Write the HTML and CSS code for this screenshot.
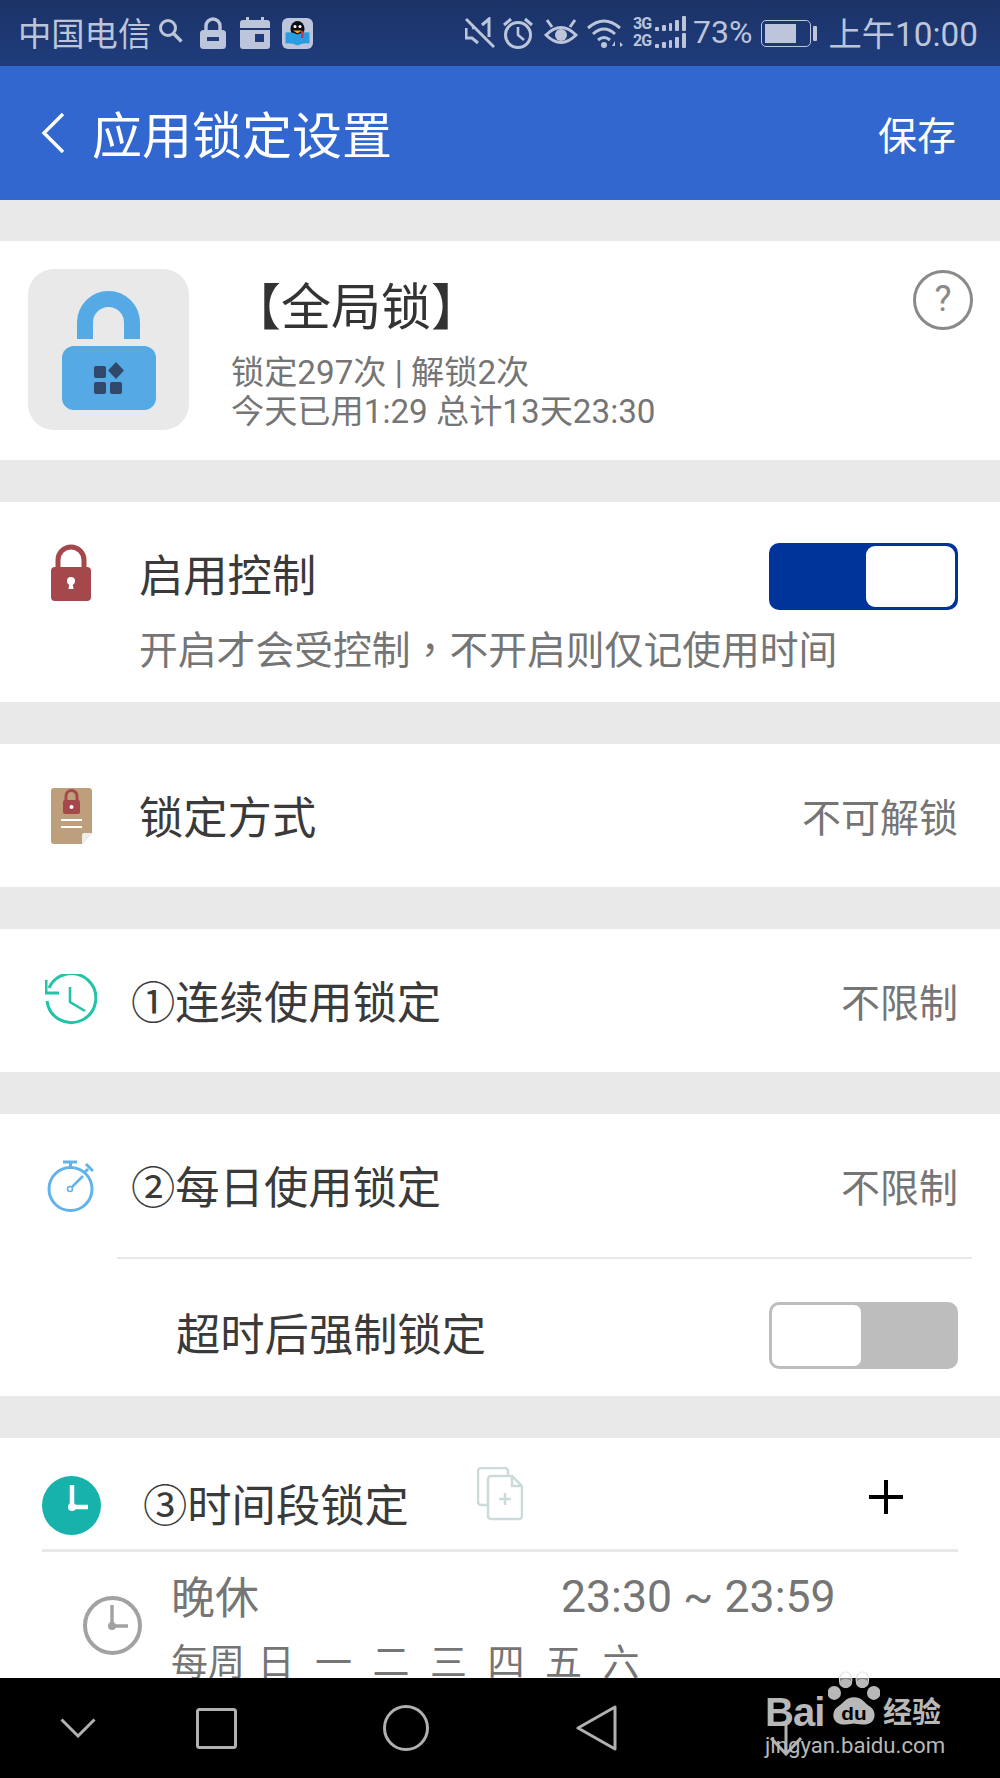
FILE: index.html
```html
<!DOCTYPE html>
<html lang="zh-CN">
<head>
  <meta charset="UTF-8" />
  <meta name="viewport" content="width=device-width, initial-scale=1.0">
  <title>应用锁定设置</title>
  <link rel="stylesheet" href="styles.css">
</head>
<body>
  <div class="status-bar">
    <div class="status-left">
      <span class="carrier">中国电信</span>
      <svg class="st-search" viewBox="0 0 26 26"><circle cx="10" cy="10" r="7.5" fill="none" stroke="#bcc5d9" stroke-width="3"/><path d="M15.5 15.5l8 8" stroke="#bcc5d9" stroke-width="3.4"/></svg>
      <svg class="st-lock" viewBox="0 0 26 32"><path d="M6 14V9a7 7 0 0 1 14 0v5" fill="none" stroke="#bcc5d9" stroke-width="3.4"/><rect y="13" width="26" height="19" rx="3.5" fill="#bcc5d9"/><rect x="7" y="20" width="12" height="4" fill="#1e3a78"/></svg>
      <svg class="st-cal" viewBox="0 0 30 32"><path d="M3 3h24a3 3 0 0 1 3 3v5H0V6a3 3 0 0 1 3-3zM0 13h30v16a3 3 0 0 1-3 3H3a3 3 0 0 1-3-3z" fill="#bcc5d9"/><rect x="6" y="0" width="3" height="4" fill="#bcc5d9"/><rect x="21" y="0" width="3" height="4" fill="#bcc5d9"/><rect x="15" y="17" width="9" height="8" fill="#1e3a78"/></svg>
      <svg class="st-qq" viewBox="0 0 31 31">
        <rect width="31" height="31" rx="6" fill="#bcc5d9"/>
        <ellipse cx="15.5" cy="11" rx="7" ry="8" fill="#0c0c14"/>
        <circle cx="13" cy="8.5" r="1.5" fill="#fff"/><circle cx="18" cy="8.5" r="1.5" fill="#fff"/>
        <path d="M11 12.5h9l-4.5 3z" fill="#f0a020"/>
        <path d="M3.5 14.5q6-1 12 2q6-3 12-2v11q-6-1-12 2q-6-3-12-2z" fill="#2a9ce0"/>
        <rect x="19" y="13" width="2.4" height="7" fill="#c8305a"/>
      </svg>
    </div>
    <div class="status-right">
      <svg class="st-mute" viewBox="0 0 30 32"><path d="M1 11v10h6l6 5M24 20V2l-7 6" fill="none" stroke="#bcc5d9" stroke-width="3"/><path d="M1 2l28 28" stroke="#bcc5d9" stroke-width="3"/><path d="M10 10L7 11" stroke="#bcc5d9" stroke-width="3"/></svg>
      <svg class="st-alarm" viewBox="0 0 30 32"><circle cx="15" cy="18" r="12.5" fill="none" stroke="#bcc5d9" stroke-width="3"/><path d="M15 10v8l6 5" fill="none" stroke="#bcc5d9" stroke-width="2.6"/><path d="M1 8l7-6M29 8l-7-6" stroke="#bcc5d9" stroke-width="3"/></svg>
      <svg class="st-eye" viewBox="0 0 34 30"><path d="M2 17q15-15 30 0q-15 15-30 0z" fill="none" stroke="#bcc5d9" stroke-width="3"/><circle cx="17" cy="17" r="6" fill="#bcc5d9"/><path d="M3 2l5 7M31 2l-5 7M17 0v0" stroke="#bcc5d9" stroke-width="3"/></svg>
      <svg class="st-wifi" viewBox="0 0 36 32"><g fill="none" stroke="#bcc5d9" stroke-width="3"><path d="M1 11q16-14 32 0"/><path d="M6 17q11-10 22 0"/><path d="M11 23q6-5 12 0"/></g><circle cx="17" cy="28" r="3" fill="#bcc5d9"/><path d="M28 24l-3 5h3zM31 23v9M33 25l3 3-3 2z" fill="#bcc5d9"/></svg>
      <div class="signal">
        <div class="signal-row"><span class="net">3G</span><i class="b b1"></i><i class="b b2"></i><i class="b b3"></i><i class="b b4"></i><i class="b b5"></i></div>
        <div class="signal-row"><span class="net">2G</span><i class="b b1"></i><i class="b b2"></i><i class="b b3"></i><i class="b b4"></i><i class="b b5"></i></div>
      </div>
      <span class="percent">73%</span>
      <div class="battery"><div class="battery-body"><div class="battery-fill"></div></div><div class="battery-tip"></div></div>
      <span class="clock">上午10:00</span>
    </div>
  </div>

  <div class="toolbar">
    <svg class="back" viewBox="0 0 24 42"><path d="M22 2L3 21l19 19" fill="none" stroke="#fff" stroke-width="3.4"/></svg>
    <span class="toolbar-title">应用锁定设置</span>
    <span class="toolbar-save">保存</span>
  </div>

  <main class="content">
    <section class="card app-card">
      <div class="app-icon">
        <svg viewBox="0 0 161 161" width="161" height="161">
          <path d="M57 70V53.500a23.500 23.500 0 0 1 47 0V70" fill="none" stroke="#55a9e4" stroke-width="16"/>
          <rect x="34" y="77" width="94" height="64" rx="12" fill="#55a9e4"/>
          <g fill="#32486b">
            <rect x="66" y="97" width="12" height="12" rx="2"/>
            <rect x="66" y="113" width="12" height="12" rx="2"/>
            <rect x="82" y="113" width="12" height="12" rx="2"/>
            <path d="M88 93l8 8.500-8 8.500-8-8.500z"/>
          </g>
        </svg>
      </div>
      <div class="app-info">
        <div class="app-name">【全局锁】</div>
        <div class="app-stat">锁定297次 | 解锁2次</div>
        <div class="app-stat">今天已用1:29 总计13天23:30</div>
      </div>
      <div class="help">?</div>
    </section>

    <section class="card enable-card">
      <svg class="ic-red" viewBox="0 0 40 60"><path d="M7 28V18a13 13 0 0 1 26 0v10" fill="none" stroke="#a5484c" stroke-width="5"/><rect x="0" y="25" width="40" height="34" rx="4" fill="#a5484c"/><circle cx="20" cy="39" r="4" fill="#fff"/><path d="M18.500 40h3l1 7h-5z" fill="#fff"/></svg>
      <div class="enable-text">
        <div class="row-label">启用控制</div>
        <div class="enable-desc">开启才会受控制<span class="punct" lang="zh-TW">，</span>不开启则仅记使用时间</div>
      </div>
      <div class="toggle on"><div class="knob"></div></div>
    </section>

    <section class="card row">
      <svg class="ic-book" viewBox="0 0 41 56">
        <path d="M3 0h35a3 3 0 0 1 3 3v42l-10 11H3a3 3 0 0 1-3-3V3a3 3 0 0 1 3-3z" fill="#bd9f7c"/>
        <path d="M31 56V47a2 2 0 0 1 2-2h8z" fill="#eee"/>
        <path d="M15 13V8a5.500 5.500 0 0 1 11 0v5" fill="none" stroke="#a5484c" stroke-width="3"/>
        <rect x="12" y="12" width="17" height="14" rx="2" fill="#a5484c"/>
        <circle cx="20.500" cy="19" r="2" fill="#fff"/>
        <rect x="10" y="31" width="21" height="2" fill="#fff"/><rect x="10" y="38" width="21" height="2" fill="#fff"/>
      </svg>
      <span class="row-label row-main">锁定方式</span>
      <span class="row-value">不可解锁</span>
    </section>

    <section class="card row row-tight">
      <svg class="ic-history" viewBox="0 0 52 53"><path d="M4 14A24.500 24.500 0 1 1 2 27" fill="none" stroke="#22c3a6" stroke-width="3"/><path d="M1 6v13h13" fill="none" stroke="#22c3a6" stroke-width="3"/><path d="M25 13v15l15 9" fill="none" stroke="#22c3a6" stroke-width="2.6"/></svg>
      <span class="row-label row-main">①连续使用锁定</span>
      <span class="row-value">不限制</span>
    </section>

    <section class="card daily-card">
      <div class="row row-tight daily-head">
        <svg class="ic-watch" viewBox="0 0 47 52"><circle cx="23.500" cy="29" r="21.500" fill="none" stroke="#62b3ec" stroke-width="3"/><path d="M16 2h14M23.500 2v6M37 13l4-4M39 4l7 7" fill="none" stroke="#62b3ec" stroke-width="3"/><circle cx="23" cy="29" r="2.500" fill="none" stroke="#62b3ec" stroke-width="1.600"/><path d="M25 27l11-11" stroke="#62b3ec" stroke-width="2.500"/></svg>
        <span class="row-label row-main">②每日使用锁定</span>
        <span class="row-value">不限制</span>
      </div>
      <div class="force-row">
        <span class="row-label">超时后强制锁定</span>
        <div class="toggle off"><div class="knob"></div></div>
      </div>
    </section>

    <section class="card period-card">
      <div class="period-head">
        <svg class="ic-teal" viewBox="0 0 59 59"><circle cx="29.500" cy="29.500" r="29.500" fill="#17b3ab"/><path d="M30 9v22h16" fill="none" stroke="#fff" stroke-width="4.500"/><circle cx="30" cy="31" r="4" fill="#fff"/></svg>
        <span class="period-title">③时间段锁定</span>
        <svg class="ic-copy" viewBox="0 0 46 54"><g fill="#fff" stroke="#ccdbda" stroke-width="2.500"><path d="M27 38H4a3 3 0 0 1-3-3V4a3 3 0 0 1 3-3h24a3 3 0 0 1 3 3v5"/><path d="M14 9h21l10 10v30a3 3 0 0 1-3 3H14a3 3 0 0 1-3-3V12a3 3 0 0 1 3-3z"/><path d="M35 9v10h10" fill="none"/><path d="M28 26v12M22 32h12" fill="none"/></g></svg>
        <svg class="ic-plus" viewBox="0 0 34 34"><path d="M17 0v34M0 17h34" stroke="#000" stroke-width="4"/></svg>
      </div>
      <div class="period-item">
        <svg class="ic-grey" viewBox="0 0 59 59"><circle cx="29.500" cy="29.500" r="27.500" fill="none" stroke="#a2a2a2" stroke-width="4"/><path d="M29 9v21h16" fill="none" stroke="#a2a2a2" stroke-width="3.500"/><circle cx="29" cy="30" r="4" fill="#a2a2a2"/></svg>
        <div class="period-info">
          <div class="period-top"><span class="period-name">晚休</span><span class="period-time">23:30 ~ 23:59</span></div>
          <div class="period-days"><span class="days-label">每周</span><span>日</span><span>一</span><span>二</span><span>三</span><span>四</span><span>五</span><span>六</span></div>
        </div>
      </div>
    </section>
  </main>

  <nav class="navbar">
    <svg class="nav-down" viewBox="0 0 36 20"><path d="M1.500 1.500L18 18 34.500 1.500" fill="none" stroke="#b0b0b0" stroke-width="3"/></svg>
    <svg class="nav-square" viewBox="0 0 41 41"><rect x="1.500" y="1.500" width="38" height="38" rx="2" fill="none" stroke="#b0b0b0" stroke-width="3"/></svg>
    <svg class="nav-circle" viewBox="0 0 46 46"><circle cx="23" cy="23" r="21.500" fill="none" stroke="#b0b0b0" stroke-width="3"/></svg>
    <svg class="nav-back" viewBox="0 0 41 46"><path d="M39 2v42L2 23z" fill="none" stroke="#b0b0b0" stroke-width="3" stroke-linejoin="round"/></svg>
    <svg class="nav-pull" viewBox="0 0 32 34"><path d="M16 0v32M1 16l15 16 15-16" fill="none" stroke="#b0b0b0" stroke-width="3"/></svg>
  </nav>

  <div class="watermark">
    <div class="wm-top">
      <span class="wm-bai">Bai</span>
      <svg class="wm-paw" viewBox="0 0 50 64" preserveAspectRatio="none">
        <ellipse cx="17" cy="10" rx="6" ry="9" fill="#fff" fill-opacity=".5" stroke="#ddd"/>
        <ellipse cx="33" cy="10" rx="6" ry="9" fill="#fff" fill-opacity=".5" stroke="#ddd"/>
        <ellipse cx="6" cy="25" rx="6.500" ry="8" fill="#b8b8b8"/>
        <ellipse cx="44" cy="25" rx="6.500" ry="8" fill="#b8b8b8"/>
        <ellipse cx="17" cy="14" rx="6" ry="5" fill="#b8b8b8"/>
        <ellipse cx="33" cy="14" rx="6" ry="5" fill="#b8b8b8"/>
        <path d="M25 30c8 0 10 7 16 11 6 5 6 21-8 20-4 0-6-1-8-1s-4 1-8 1c-14 1-14-15-8-20 6-4 8-11 16-11z" fill="#b8b8b8"/>
        <text class="wm-du" x="25" y="56" text-anchor="middle">du</text>
      </svg>
      <span class="wm-jy">经验</span>
    </div>
    <div class="wm-url">jingyan.baidu.com</div>
  </div>
</body>
</html>
```

FILE: styles.css
```css
:root {
  --gap-bg: #e9e9e9;
  --label: #3a3a3a;
  --muted: #757575;
  --status: #bcc5d9;
  --blue: #3267cf;
}
* { box-sizing: border-box; }
body {
  margin: 0;
  width: 1000px;
  height: 1778px;
  overflow: hidden;
  position: relative;
  display: flex;
  flex-direction: column;
  background: var(--gap-bg);
  font-family: Roboto, "Noto Sans CJK SC", sans-serif;
  color: var(--label);
}
svg { display: block; flex-shrink: 0; }

/* status bar */
.status-bar {
  height: 66px;
  flex-shrink: 0;
  display: flex;
  justify-content: space-between;
  align-items: center;
  padding: 0 22px 0 18px;
  background: linear-gradient(#1b3367, #1f3c7c);
  color: var(--status);
}
.status-left, .status-right { display: flex; align-items: center; }
.carrier { font-size: 33.3px; line-height: 36px; width: 134px; margin-top: 4px; white-space: nowrap; }
.st-search { width: 26px; height: 26px; margin: -4px 0 0 6px; }
.st-lock { width: 26px; height: 32px; margin-left: 16px; }
.st-cal { width: 30px; height: 32px; margin-left: 14px; }
.st-qq { width: 31px; height: 31px; margin-left: 12px; }
.st-mute { width: 30px; height: 32px; margin-right: -2px; }
.st-alarm { width: 30px; height: 32px; margin-left: 10px; }
.st-eye { width: 34px; height: 30px; margin-left: 11px; }
.st-wifi { width: 36px; height: 32px; margin-left: 9px; }
.signal { margin-left: 10px; width: 53px; }
.signal-row { display: flex; align-items: flex-end; gap: 3px; height: 15px; margin-bottom: 2px; }
.net { font-size: 16px; line-height: 15px; font-weight: 700; width: 16px; margin-right: 3px; letter-spacing: -1px; }
.b { display: block; width: 4px; background: var(--status); border-radius: 1px; }
.b1 { height: 4px; }
.b2 { height: 6px; }
.b3 { height: 8px; }
.b4 { height: 11px; }
.b5 { height: 15px; }
.percent { font-size: 32px; line-height: 36px; margin-left: 7px; margin-top: -2px; }
.battery { display: flex; align-items: center; margin-left: 9px; }
.battery-body { width: 50px; height: 27px; padding: 3px; border: 1.5px solid var(--status); border-radius: 5px; }
.battery-fill { width: 72%; height: 100%; background: var(--status); }
.battery-tip { width: 4px; height: 15px; margin-left: 2px; background: var(--status); border-radius: 1px; }
.clock { font-size: 33.3px; line-height: 36px; margin-left: 11px; margin-top: 4px; white-space: nowrap; }

/* toolbar */
.toolbar {
  height: 134px;
  flex-shrink: 0;
  display: flex;
  align-items: center;
  padding: 0 44px 0 41px;
  background: var(--blue);
  color: #fff;
}
.back { width: 24px; height: 42px; }
.toolbar-title { font-size: 50px; margin-left: 27px; margin-top: -2px; }
.toolbar-save { font-size: 39px; margin-left: auto; }

/* cards */
.content {
  height: 1478px;
  flex-shrink: 0;
  overflow: hidden;
  padding-top: 41px;
  display: flex;
  flex-direction: column;
  gap: 42px;
}
.card { background: #fff; flex-shrink: 0; }
.row-label { font-size: 44.3px; line-height: 60px; color: var(--label); white-space: nowrap; }
.row-value { font-size: 39px; color: var(--muted); margin-left: auto; margin-top: -2px; white-space: nowrap; }

.app-card {
  height: 219px;
  display: flex;
  padding: 28px 27px 0 28px;
}
.app-icon { width: 161px; height: 161px; background: var(--gap-bg); border-radius: 26px; }
.app-info { margin-left: 42px; }
.app-name { font-size: 50px; line-height: 60px; margin-top: 9px; color: #333; }
.app-stat { font-size: 33.2px; line-height: 39px; color: var(--muted); white-space: nowrap; }
.app-stat:nth-child(2) { margin-top: 15px; }
.help {
  width: 60px;
  height: 60px;
  margin-left: auto;
  margin-top: 1px;
  border: 3px solid #8a8a8a;
  border-radius: 50%;
  color: #8a8a8a;
  font-size: 36px;
  line-height: 52px;
  text-align: center;
}

.enable-card {
  height: 200px;
  display: flex;
  align-items: flex-start;
  padding: 41px 42px 0 51px;
}
.ic-red { width: 40px; height: 60px; margin-top: -1px; }
.enable-text { width: 578px; margin-left: 48px; margin-top: 4px; }
.enable-desc { font-size: 38.8px; line-height: 50px; margin-top: 15px; color: var(--muted); white-space: nowrap; }
.punct { font-family: "Noto Sans CJK TC", sans-serif; }

.toggle {
  width: 189px;
  height: 67px;
  flex-shrink: 0;
  margin-left: auto;
  padding: 3px;
  border-radius: 10px;
  display: flex;
}
.knob { width: 89px; height: 100%; background: #fff; border-radius: 9px; }
.toggle.on { background: #00349b; justify-content: flex-end; }
.toggle.off { background: #bdbdbd; padding: 1px; }
.toggle.off .knob { width: 93px; border: 2px solid #bdbdbd; }

.row {
  height: 143px;
  display: flex;
  align-items: center;
  padding: 0 42px 0 51px;
}
.row-tight { padding-left: 45px; }
.ic-book { width: 41px; height: 56px; }
.row .row-main { margin-left: 47px; margin-top: 6px; }
.row-tight .row-main { margin-left: 34px; }
.ic-history { width: 52px; height: 53px; }

.daily-card { height: 282px; }
.daily-head { padding-left: 47px; }
.daily-head .row-main { margin-left: 37px; }
.ic-watch { width: 47px; height: 52px; }
.force-row {
  height: 139px;
  margin-left: 117px;
  margin-right: 28px;
  border-top: 2px solid var(--gap-bg);
  display: flex;
  align-items: flex-start;
  padding: 43px 14px 0 59px;
}
.force-row .row-label { margin-top: 4px; }

.period-card { height: 300px; }
.period-head {
  height: 114px;
  margin: 0 42px;
  border-bottom: 3px solid var(--gap-bg);
  display: flex;
  align-items: flex-start;
}
.ic-teal { width: 59px; height: 59px; margin-top: 38px; }
.period-title { font-size: 44.3px; line-height: 60px; margin: 39px 0 0 42px; white-space: nowrap; }
.ic-copy { width: 46px; height: 54px; margin: 29px 0 0 68px; }
.ic-plus { width: 34px; height: 34px; margin: 42px 0 0 346px; }

.period-item { display: flex; padding: 44px 0 0 83px; }
.ic-grey { width: 59px; height: 59px; }
.period-info { margin-left: 29px; margin-top: -31px; }
.period-top { display: flex; align-items: center; height: 60px; }
.period-name { font-size: 44px; width: 390px; color: var(--muted); }
.period-time { font-size: 44.6px; margin-top: 4px; color: var(--muted); white-space: nowrap; }
.period-days {
  display: flex;
  gap: 20.5px;
  margin-top: 9px;
  font-size: 37px;
  line-height: 60px;
  color: var(--muted);
}
.days-label { margin-right: -8px; }

/* nav */
.navbar {
  height: 100px;
  flex-shrink: 0;
  display: flex;
  align-items: center;
  background: #000;
}
.nav-down { width: 36px; height: 20px; margin-left: 60px; }
.nav-square { width: 41px; height: 41px; margin-left: 100px; }
.nav-circle { width: 46px; height: 46px; margin-left: 146px; }
.nav-back { width: 41px; height: 46px; margin-left: 147px; }
.nav-pull { width: 32px; height: 34px; margin-left: 153px; margin-top: 22px; }

/* watermark over the nav bar */
.watermark {
  position: absolute;
  left: 765px;
  top: 1671px;
  width: 185px;
  color: #b8b8b8;
}
.wm-top { display: flex; align-items: flex-end; height: 56px; }
.wm-bai { font-family: "Liberation Sans", sans-serif; font-weight: 700; font-size: 40px; line-height: 42px; width: 63px; letter-spacing: -1px; margin-bottom: -6px; }
.wm-paw { width: 52px; height: 56px; }
.wm-du { font-family: "Liberation Sans", sans-serif; font-size: 20px; font-weight: 700; fill: #000; }
.wm-jy { font-size: 29px; font-weight: 700; line-height: 34px; margin-left: 3px; margin-bottom: -3px; white-space: nowrap; }
.wm-url { font-size: 22.2px; line-height: 28px; margin-top: 4px; white-space: nowrap; }
```
